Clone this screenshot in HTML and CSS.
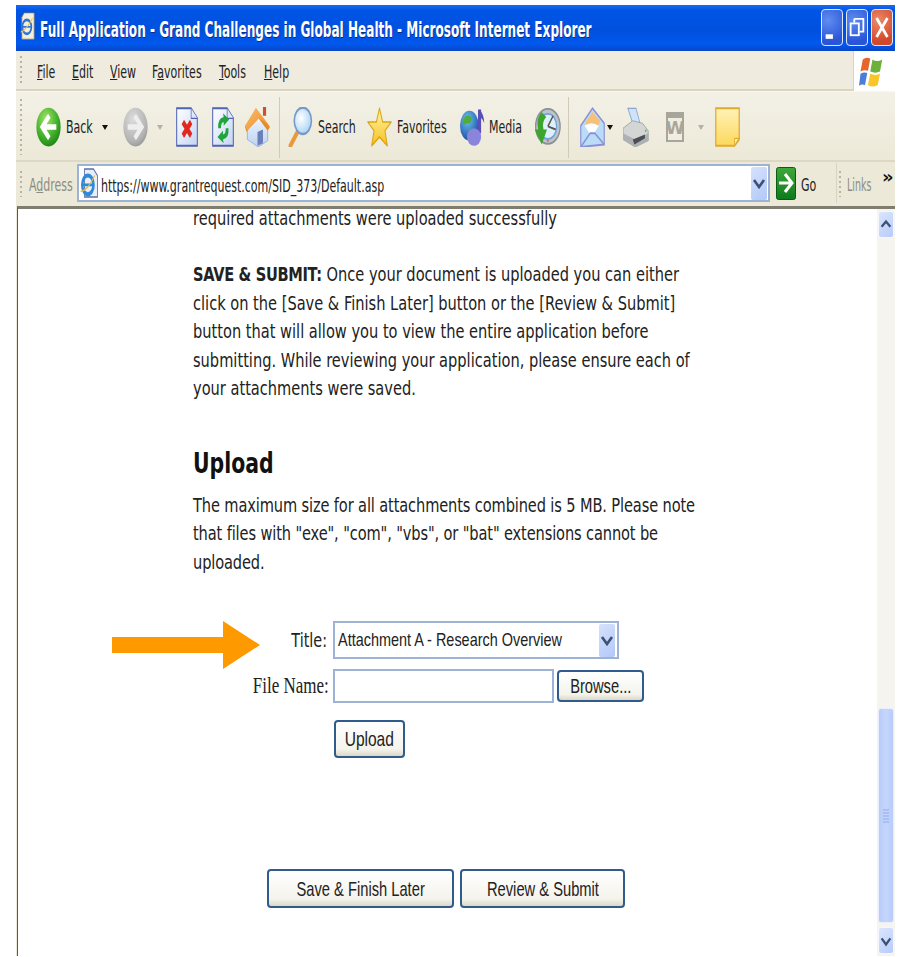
FILE: index.html
```html
<!DOCTYPE html>
<html lang="en">
<head>
<meta charset="utf-8">
<title>Full Application - Grand Challenges in Global Health</title>
<link rel="stylesheet" href="styles.css">
</head>
<body>
<svg class="defs" aria-hidden="true">
  <defs>
    <radialGradient id="gGreen" cx=".4" cy=".3" r=".8"><stop offset="0" stop-color="#a4e46a"/><stop offset=".6" stop-color="#3fae2a"/><stop offset="1" stop-color="#157a12"/></radialGradient>
    <radialGradient id="gGrey" cx=".4" cy=".3" r=".8"><stop offset="0" stop-color="#dcdcdc"/><stop offset=".7" stop-color="#b4b4b4"/><stop offset="1" stop-color="#8e8e8e"/></radialGradient>
    <linearGradient id="gPage" x1="0" y1="0" x2="1" y2="1"><stop offset="0" stop-color="#ffffff"/><stop offset="1" stop-color="#c4d4f4"/></linearGradient>
    <linearGradient id="gStar" x1="0" y1="0" x2="0" y2="1"><stop offset="0" stop-color="#fff6a8"/><stop offset="1" stop-color="#f8c020"/></linearGradient>
    <linearGradient id="gNote" x1="0" y1="0" x2="0" y2="1"><stop offset="0" stop-color="#fff2b8"/><stop offset="1" stop-color="#fdd85c"/></linearGradient>
    <linearGradient id="gRoof" x1="0" y1="0" x2="1" y2="1"><stop offset="0" stop-color="#fbbd6a"/><stop offset="1" stop-color="#e88a2a"/></linearGradient>
    <linearGradient id="gGo" x1="0" y1="0" x2="0" y2="1"><stop offset="0" stop-color="#3fa83a"/><stop offset="1" stop-color="#0d7a1c"/></linearGradient>
    <radialGradient id="gLens" cx=".4" cy=".4" r=".7"><stop offset="0" stop-color="#ffffff"/><stop offset="1" stop-color="#9fd0f5"/></radialGradient>
    <radialGradient id="gGlobe" cx=".4" cy=".3" r=".8"><stop offset="0" stop-color="#6cc4f0"/><stop offset="1" stop-color="#123f9e"/></radialGradient>
    <linearGradient id="gWall" x1="0" y1="0" x2="0" y2="1"><stop offset="0" stop-color="#f2f7fe"/><stop offset="1" stop-color="#bcd2f2"/></linearGradient>
  </defs>
</svg>

<div class="window">
  <header class="titlebar">
    <svg class="app-icon" viewBox="0 0 32 32" preserveAspectRatio="none">
      <path d="M9 1H27V31H5V6Z" fill="#f4efdc" stroke="#7d7a68"/>
      <circle cx="14" cy="17" r="8" fill="none" stroke="#2f73d8" stroke-width="3"/>
      <path d="M7 17H21" stroke="#2f73d8" stroke-width="2"/>
      <path d="M3 23Q14 20 24 7" fill="none" stroke="#f0c040" stroke-width="1.5"/>
    </svg>
    <div class="title-text"><span class="sq-title">Full Application - Grand Challenges in Global Health - Microsoft Internet Explorer</span></div>
    <div class="win-buttons">
      <div class="win-btn">
        <svg viewBox="0 0 22 37"><rect x="4" y="26" width="8" height="5" fill="#fff"/></svg>
      </div>
      <div class="win-btn">
        <svg viewBox="0 0 22 37"><path d="M8 9h10v14h-4M8 9v4" fill="none" stroke="#fff" stroke-width="2"/><rect x="4" y="14" width="9" height="13" fill="none" stroke="#fff" stroke-width="2"/></svg>
      </div>
      <div class="win-btn close">
        <svg viewBox="0 0 22 37"><path d="M5 8L17 29M17 8L5 29" stroke="#fff" stroke-width="3"/></svg>
      </div>
    </div>
  </header>

  <nav class="menubar">
    <i class="grip"></i>
    <div class="menus">
      <span class="menu m-file"><span class="sq-ui"><u>F</u>ile</span></span>
      <span class="menu m-edit"><span class="sq-ui"><u>E</u>dit</span></span>
      <span class="menu m-view"><span class="sq-ui"><u>V</u>iew</span></span>
      <span class="menu m-fav"><span class="sq-ui">F<u>a</u>vorites</span></span>
      <span class="menu m-tools"><span class="sq-ui"><u>T</u>ools</span></span>
      <span class="menu m-help"><span class="sq-ui"><u>H</u>elp</span></span>
    </div>
    <div class="flag-box">
      <svg class="flag" viewBox="0 0 32 44" preserveAspectRatio="none">
        <path d="M5 6Q10 2 15 5L12 21Q7 19 2 22Z" fill="#e8642c"/>
        <path d="M18 6Q24 10 31 6L28 22Q22 25 15 22Z" fill="#6cb23a"/>
        <path d="M2 25Q7 22 11 24L8 40Q4 38 0 41Z" fill="#4a7fd8"/>
        <path d="M15 25Q22 28 28 25L25 40Q18 44 12 40Z" fill="#f8c628"/>
      </svg>
    </div>
  </nav>

  <div class="toolbar">
    <i class="grip tall"></i>
    <svg class="ico i-back" viewBox="0 0 32 32" preserveAspectRatio="none">
      <circle cx="16" cy="16" r="15.5" fill="url(#gGreen)"/>
      <path d="M17 7L8 16L17 25M8 16H26" fill="none" stroke="#fff" stroke-width="4.5"/>
    </svg>
    <span class="lbl l-back"><span class="sq-ui">Back</span></span>
    <i class="drop d-back"></i>
    <svg class="ico i-fwd" viewBox="0 0 32 32" preserveAspectRatio="none">
      <circle cx="16" cy="16" r="15.5" fill="url(#gGrey)"/>
      <path d="M15 7L24 16L15 25M24 16H6" fill="none" stroke="#eee" stroke-width="4.5"/>
    </svg>
    <i class="drop off d-fwd"></i>
    <svg class="ico i-stop" viewBox="0 0 32 32" preserveAspectRatio="none">
      <path d="M1 1H22L31 9V31H1Z" fill="url(#gPage)" stroke="#4f63b4" stroke-width="1.5"/>
      <path d="M22 1V9H31" fill="#dfe7fa" stroke="#4f63b4"/>
      <path d="M10 12L22 23M22 12L10 23" stroke="#e0281c" stroke-width="5"/>
    </svg>
    <svg class="ico i-refresh" viewBox="0 0 32 32" preserveAspectRatio="none">
      <path d="M1 1H22L31 9V31H1Z" fill="url(#gPage)" stroke="#4f63b4" stroke-width="1.5"/>
      <path d="M22 1V9H31" fill="#dfe7fa" stroke="#4f63b4"/>
      <path d="M9 17Q8 9 17 8L16 5L25 10L17 15L17 12Q13 12 13 17Z" fill="#1fa53a"/>
      <path d="M24 17Q25 25 16 26L17 29L8 24L16 19L16 22Q20 22 20 17Z" fill="#1fa53a"/>
    </svg>
    <svg class="ico i-home" viewBox="0 0 32 32" preserveAspectRatio="none">
      <path d="M3 16V26L17 32L29 27V15L16 6Z" fill="url(#gWall)" stroke="#8fabdc" stroke-width=".8"/>
      <path d="M16 20L23 18V29L16 31Z" fill="#6a7fb8"/>
      <path d="M0 16L14 1L32 16L29 19L15 7L2 20Z" fill="#e88a2a"/>
      <path d="M0 15L14 1L31 15L18 9L3 19Z" fill="url(#gRoof)"/>
      <rect x="23" y="0" width="4" height="7" fill="#c8503a"/>
    </svg>
    <i class="tool-sep s1"></i>
    <svg class="ico i-search" viewBox="0 0 32 32" preserveAspectRatio="none">
      <path d="M13 19L3 31" stroke="#e69a3c" stroke-width="4.5" stroke-linecap="round"/>
      <ellipse cx="19" cy="11" rx="11" ry="10.5" fill="url(#gLens)" stroke="#7b98c8" stroke-width="2"/>
    </svg>
    <span class="lbl l-search"><span class="sq-ui">Search</span></span>
    <svg class="ico i-star" viewBox="0 0 32 32" preserveAspectRatio="none">
      <path d="M16 1L20 12L31 12L23 19L26 31L16 24L6 31L9 19L1 12L12 12Z" fill="url(#gStar)" stroke="#dca412" stroke-width="1.3" stroke-linejoin="round"/>
    </svg>
    <span class="lbl l-fav"><span class="sq-ui">Favorites</span></span>
    <svg class="ico i-media" viewBox="0 0 32 32" preserveAspectRatio="none">
      <circle cx="12" cy="15" r="12" fill="url(#gGlobe)"/>
      <path d="M6 8Q12 5 15 9Q14 14 9 13Q6 15 3 13ZM12 17L18 18L15 24L12 22Z" fill="#4fae3a"/>
      <path d="M25 2V21" stroke="#5a4fb8" stroke-width="4"/>
      <path d="M25 2Q31 6 31 13Q28 8 25 9Z" fill="#5a4fb8"/>
      <ellipse cx="18" cy="24" rx="9" ry="7" fill="#8a84dc"/>
    </svg>
    <span class="lbl l-media"><span class="sq-ui">Media</span></span>
    <svg class="ico i-history" viewBox="0 0 32 32" preserveAspectRatio="none">
      <circle cx="17" cy="15.5" r="14" fill="#bcc3cc" stroke="#8a8f96" stroke-width="1.5"/>
      <circle cx="17" cy="15.5" r="10" fill="#dff0fb" stroke="#6ca6dc" stroke-width="1.5"/>
      <path d="M17 15.5L23 7M17 15.5L26 18" stroke="#555" stroke-width="1.5"/>
      <path d="M10 4Q3 9 6 18L2 18L10 30L16 18L12 18Q10 12 15 8Z" fill="#3da52e"/>
      <circle cx="17" cy="27" r="1" fill="#e2643c"/>
    </svg>
    <i class="tool-sep s2"></i>
    <svg class="ico i-mail" viewBox="0 0 32 32" preserveAspectRatio="none">
      <path d="M1 15L16 1L31 13V30L1 32Z" fill="#b9dcf7" stroke="#8a90d8" stroke-width="1.5"/>
      <path d="M7 12L16 4L26 11L22 17Q15 12 9 18Z" fill="#f6c079"/>
      <path d="M6 15Q14 11 24 15L18 21L12 21Z" fill="#fff"/>
      <path d="M1 32L13 21H19L31 30" fill="none" stroke="#8a90d8" stroke-width="1.5"/>
    </svg>
    <i class="drop d-mail"></i>
    <svg class="ico i-print" viewBox="0 0 32 32" preserveAspectRatio="none">
      <path d="M6 1H16L21 13H12Z" fill="#cfe3f8" stroke="#88a4d0"/>
      <path d="M0 17L12 11L24 13L31 19V27L15 32L0 26Z" fill="#d4d6d6" stroke="#9a9d9f" stroke-width=".8"/>
      <path d="M0 21L15 26L31 21V27L15 32L0 26Z" fill="#aeb1b3"/>
      <path d="M12 26L27 22L27 25L14 30Z" fill="#4c4f52"/>
      <circle cx="28" cy="19" r="1" fill="#4fc04a"/>
    </svg>
    <div class="word">
      <svg class="ico-word" viewBox="0 0 18 30" preserveAspectRatio="none">
        <rect x="1" y="1" width="16" height="28" fill="#f0eee2" stroke="#a8a69a" stroke-width="2"/>
        <rect x="1" y="1" width="16" height="5" fill="#a8a69a"/>
        <text class="word-w" x="9" y="22" text-anchor="middle">W</text>
      </svg>
    </div>
    <i class="drop off d-word"></i>
    <svg class="ico i-note" viewBox="0 0 32 32" preserveAspectRatio="none">
      <path d="M1 1H31V26L25 31H1Z" fill="url(#gNote)" stroke="#e0aa2a" stroke-width="1.6"/>
      <path d="M25 31V25H31Z" fill="#fbe9a6" stroke="#e0aa2a"/>
    </svg>
  </div>

  <div class="addressbar">
    <i class="grip"></i>
    <span class="addr-label"><span class="sq-ui">A<u>d</u>dress</span></span>
    <div class="addr-box">
      <svg class="page-icon" viewBox="0 0 32 32" preserveAspectRatio="none">
        <path d="M8 1H24L31 8V31H8Z" fill="#e8edf8" stroke="#5a6ea8" stroke-width="1.5"/>
        <circle cx="14" cy="18" r="10" fill="none" stroke="#2f8ad8" stroke-width="4.5"/>
        <path d="M5 18H23" stroke="#2f8ad8" stroke-width="3"/>
        <path d="M1 25Q14 24 26 8" fill="none" stroke="#e8b840" stroke-width="1.5"/>
      </svg>
      <span class="url"><span class="sq-ui">https://www.grantrequest.com/SID_373/Default.asp</span></span>
      <div class="combo-btn addr-drop">
        <svg viewBox="0 0 16 33"><path d="M3 13L8 20L13 13" fill="none" stroke="#3d5176" stroke-width="2.6"/></svg>
      </div>
    </div>
    <svg class="go-icon" viewBox="0 0 20 33" preserveAspectRatio="none">
      <rect x=".5" y=".5" width="19" height="32" rx="2" fill="url(#gGo)" stroke="#0a5c14"/>
      <path d="M9 7L16 16L9 25M16 16H3" fill="none" stroke="#fff" stroke-width="3"/>
    </svg>
    <span class="go-label"><span class="sq-ui">Go</span></span>
    <i class="band-sep"></i>
    <i class="grip links-grip"></i>
    <span class="links"><span class="sq-links">Links</span></span>
    <span class="chevrons">»</span>
  </div>

  <main class="viewport">
    <div class="doc">
      <div class="copy">
        <p class="clipped">required attachments were uploaded successfully</p>
        <p class="para"><b>SAVE &amp; SUBMIT:</b> Once your document is uploaded you can either<br>click on the [Save &amp; Finish Later] button or the [Review &amp; Submit]<br>button that will allow you to view the entire application before<br>submitting. While reviewing your application, please ensure each of<br>your attachments were saved.</p>
        <h2 class="heading">Upload</h2>
        <p class="para tight">The maximum size for all attachments combined is 5 MB. Please note<br>that files with "exe", "com", "vbs", or "bat" extensions cannot be<br>uploaded.</p>
      </div>

      <form class="upload">
        <svg class="arrow" viewBox="0 0 148 48"><path d="M0 16H111V0L148 24L111 48V32H0Z" fill="#ff9900"/></svg>
        <label class="f-label title-label"><span class="sq-ui-r">Title:</span></label>
        <div class="select-box">
          <span class="select-text"><span class="sq-sel">Attachment A - Research Overview</span></span>
          <div class="combo-btn sel-drop">
            <svg viewBox="0 0 16 33"><path d="M3 13L8 20L13 13" fill="none" stroke="#3d5176" stroke-width="2.6"/></svg>
          </div>
        </div>
        <label class="f-label name-label"><span class="sq-serif">File Name:</span></label>
        <div class="file-row">
          <div class="file-input"></div>
          <div class="btn browse"><span class="sq-btn">Browse...</span></div>
        </div>
        <div></div>
        <div class="btn send"><span class="sq-send">Upload</span></div>
      </form>

      <div class="actions">
        <div class="btn save"><span class="sq-btn">Save &amp; Finish Later</span></div>
        <div class="btn review"><span class="sq-btn">Review &amp; Submit</span></div>
      </div>
    </div>

    <aside class="scrollbar">
      <div class="sb-btn sb-up">
        <svg viewBox="0 0 16 27"><path d="M3 16L8 10L13 16" fill="none" stroke="#3d5176" stroke-width="2.6"/></svg>
      </div>
      <div class="sb-track"></div>
      <div class="sb-thumb">
        <svg class="sb-grip" viewBox="0 0 8 14"><path d="M1 1H7M1 4H7M1 7H7M1 10H7M1 13H7" stroke="#8fa9ee" stroke-width="1"/></svg>
      </div>
      <div class="sb-btn sb-down">
        <svg viewBox="0 0 16 27"><path d="M3 11L8 18L13 11" fill="none" stroke="#3d5176" stroke-width="2.6"/></svg>
      </div>
    </aside>
  </main>
</div>
</body>
</html>
```

FILE: styles.css
```css
* { box-sizing: border-box; }

html, body { margin: 0; background: #fff; }

body {
  width: 899px;
  height: 957px;
  padding: 5px 4px 0 16px;
  overflow: hidden;
  font-family: "DejaVu Sans", sans-serif;
}

.defs { position: absolute; width: 0; height: 0; }

.window {
  display: flex;
  flex-direction: column;
  height: 951px;
  background: #ece9d8;
}

/* The capture is squeezed sideways, so runs of text are narrowed with a transform */
.sq-title, .sq-ui, .sq-links, .sq-ui-r, .sq-serif, .sq-sel, .sq-btn, .sq-send {
  display: inline-block;
  white-space: nowrap;
  transform-origin: left center;
}

/* Title bar */
.titlebar {
  display: flex;
  align-items: center;
  flex: 0 0 46px;
  padding: 0 2px 0 3px;
  background: linear-gradient(180deg, #1a6af0 0%, #0055e6 12%, #0050de 55%, #0058ee 85%, #0a46c4 100%);
}
.app-icon { width: 18px; height: 28px; margin-top: -4px; flex: none; }
.title-text { flex: 1; margin-left: 3px; height: 46px; padding-top: 2px; line-height: 46px; overflow: hidden; }
.sq-title {
  color: #fff;
  font-size: 21px;
  font-weight: bold;
  text-shadow: 1px 1px 0 #0a2a8c;
  transform: scaleX(.575);
}
.win-buttons { display: flex; gap: 3px; margin-top: -1px; }
.win-btn {
  width: 22px;
  height: 37px;
  border: 1px solid #dfe8fb;
  border-radius: 4px;
  background: radial-gradient(circle at 30% 30%, #5f8df0, #2a55d8 75%);
}
.win-btn svg { display: block; width: 100%; height: 100%; }
.win-btn.close { background: radial-gradient(circle at 30% 30%, #ec8a68, #d2482a 75%); }

/* Menu bar */
.menubar {
  display: flex;
  flex: 0 0 40px;
  align-items: center;
  padding-left: 4px;
  background: #efecdf;
  border-bottom: 2px solid #d8d4c0;
}
.grip {
  display: block;
  flex: none;
  width: 2px;
  height: 28px;
  background: repeating-linear-gradient(180deg, #b8b5a4 0 2px, transparent 2px 5px);
}
.grip.tall { height: 56px; }
.menus { display: flex; flex: 1; margin-left: 15px; padding-top: 3px; }
.menu { display: block; height: 22px; line-height: 22px; font-size: 17px; color: #222; }
.sq-ui { font-stretch: condensed; transform: scaleX(.72); }
.sq-links { font-stretch: condensed; transform: scaleX(.62); }
.m-file { width: 35px; }
.m-edit { width: 38px; }
.m-view { width: 42px; }
.m-fav { width: 67px; }
.m-tools { width: 45px; }
.m-help { width: 30px; }
.flag-box {
  display: flex;
  align-items: center;
  justify-content: center;
  align-self: stretch;
  width: 42px;
  margin-bottom: -2px;
  padding-right: 8px;
  background: #fff;
  border-left: 1px solid #d8d4c0;
}
.flag { width: 24px; height: 33px; }

/* Standard buttons */
.toolbar {
  display: flex;
  align-items: center;
  flex: 0 0 71px;
  padding: 2px 0 0 4px;
  background: linear-gradient(180deg, #f3f1e6, #ece9d8);
  border-top: 1px solid #f8f7f0;
  border-bottom: 2px solid #dcd8c4;
}
.ico { display: block; flex: none; width: 25px; height: 40px; }
.lbl { display: block; flex: none; font-size: 17px; height: 22px; line-height: 22px; color: #222; }
.drop {
  display: block;
  flex: none;
  width: 0;
  height: 0;
  border-left: 3px solid transparent;
  border-right: 3px solid transparent;
  border-top: 5px solid #111;
}
.drop.off { border-top-color: #b4b2a4; }
.tool-sep { display: block; flex: none; width: 1px; height: 61px; background: #cfcbb8; }

.i-back { margin-left: 14px; }
.l-back { width: 36px; margin-left: 5px; }
.d-back { margin-left: 0; }
.i-fwd { margin-left: 15px; }
.d-fwd { margin-left: 9px; }
.i-stop { width: 22px; margin-left: 13px; }
.i-refresh { width: 22px; margin-left: 14px; }
.i-home { margin-left: 11px; }
.s1 { margin-left: 9px; }
.i-search { margin-left: 8px; }
.l-search { width: 49px; margin-left: 5px; }
.i-star { margin-left: 0; }
.l-fav { width: 63px; margin-left: 5px; }
.i-media { margin-left: 0; }
.l-media { width: 44px; margin-left: 4px; }
.i-history { width: 28px; }
.s2 { margin-left: 7px; }
.i-mail { margin-left: 11px; }
.d-mail { margin-left: 2px; }
.i-print { width: 26px; margin-left: 10px; }
.word { flex: none; width: 18px; height: 30px; margin-left: 17px; }
.ico-word { display: block; width: 100%; height: 100%; }
.word-w { font: bold 17px "DejaVu Sans", sans-serif; fill: #a8a69a; }
.d-word { margin-left: 14px; }
.i-note { margin-left: 11px; }

/* Address bar */
.addressbar {
  display: flex;
  align-items: center;
  flex: 0 0 44px;
  padding-left: 4px;
  background: #ece9d8;
}
.addressbar > .grip { height: 26px; }
.addr-label { display: block; flex: none; width: 48px; margin-left: 7px; font-size: 17px; line-height: 22px; color: #8d8c80; margin-top: 2px; }
.addr-box {
  display: flex;
  align-items: center;
  flex: none;
  width: 693px;
  height: 38px;
  margin-top: -2px;
  background: #fff;
  border: 2px solid #9db3d6;
}
.page-icon { flex: none; width: 18px; height: 30px; margin-left: 1px; }
.url { flex: 1; margin: 5px 0 0 3px; font-size: 17px; line-height: 22px; color: #222; }
.combo-btn {
  flex: none;
  width: 16px;
  height: 33px;
  border-radius: 2px;
  background: linear-gradient(135deg, #d6e2fd, #b2c8f8);
}
.combo-btn svg { display: block; width: 100%; height: 100%; }
.addr-drop { margin-right: 1px; }
.go-icon { flex: none; width: 20px; height: 33px; margin: -2px 0 0 6px; }
.go-label { flex: none; width: 35px; margin-left: 5px; font-size: 17px; line-height: 22px; color: #222; margin-top: 2px; }
.band-sep { display: block; flex: none; width: 1px; height: 40px; margin-top: -3px; background: #d8d4c0; }
.links-grip { margin-left: 2px; height: 24px; }
.links { flex: none; width: 35px; margin-left: 6px; font-size: 17px; line-height: 22px; color: #8d8c80; margin-top: 2px; }
.chevrons { flex: none; font: bold 18px/18px "DejaVu Sans", sans-serif; color: #111; margin-top: -14px; }

/* Page area */
.viewport {
  display: flex;
  flex: 1;
  min-height: 0;
  margin-left: 1px;
  background: #fff;
  border-top: 3px solid #7f7d70;
  border-left: 1px solid #5a5950;
}
.doc { flex: 1; min-width: 0; overflow: hidden; background: #fff; }

.copy {
  width: 930px;
  margin: -5px 0 0 175px;
  font-size: 20px;
  line-height: 28.5px;
  color: #222;
  white-space: nowrap;
  transform: scaleX(.73);
  transform-origin: left top;
}
.copy b { letter-spacing: -.45px; }
.clipped, .para { margin: 0; }
.clipped { height: 28.5px; }
.para { margin-top: 27.5px; }
.heading {
  margin: 43px 0 0;
  font-size: 28px;
  line-height: 36px;
  font-weight: bold;
  color: #111;
}
.tight { margin-top: 9px; letter-spacing: -.17px; }

/* Upload form */
.upload {
  position: relative;
  display: grid;
  grid-template-columns: 315px 1fr;
  row-gap: 10px;
  margin-top: 45px;
}
.arrow { position: absolute; left: 94px; top: 0; width: 148px; height: 48px; }
.f-label { display: block; text-align: right; padding-right: 6px; white-space: nowrap; color: #222; }
.title-label { font-size: 19px; line-height: 38px; }
.sq-ui-r { transform: scaleX(.76); transform-origin: right center; }
.name-label { font: 23px/34px "Liberation Serif", serif; padding-right: 4px; }
.sq-serif { transform: scaleX(.74); transform-origin: right center; }
.select-box {
  display: flex;
  align-items: center;
  width: 286px;
  height: 38px;
  background: #fff;
  border: 2px solid #9db3d6;
}
.select-text { flex: 1 1 0; min-width: 0; padding-left: 3px; color: #222; font: 19px/22px "Liberation Sans", sans-serif; }
.sq-sel { transform: scaleX(.76); }
.sel-drop { width: 16px; height: 33px; margin-right: 2px; }
.file-row { display: flex; align-items: center; gap: 3px; }
.file-input { width: 221px; height: 34px; background: #fff; border: 2px solid #9db3d6; }
.btn {
  display: flex;
  align-items: center;
  justify-content: center;
  border: 2px solid #2f5c8c;
  border-radius: 4px;
  background: linear-gradient(180deg, #ffffff, #f4f3ec 80%, #dcd8c8);
  color: #222;
  font: 21px/24px "Liberation Sans", sans-serif;
  overflow: hidden;
}
.sq-btn { transform: scaleX(.7); transform-origin: center; }
.sq-send { transform: scaleX(.74); transform-origin: center; }
.browse { width: 87px; height: 32px; }
.send { width: 71px; height: 38px; margin: 7px 0 0 1px; }

.actions { display: flex; gap: 6px; margin: 111px 0 0 249px; }
.save { width: 187px; height: 39px; }
.review { width: 165px; height: 39px; }

/* Scroll bar */
.scrollbar {
  position: relative;
  display: flex;
  flex-direction: column;
  flex: none;
  width: 18px;
  padding: 2px 1px 2px;
  background: #f5f4ee;
}
.sb-btn {
  flex: none;
  height: 27px;
  border: 1px solid #f4f7fe;
  border-radius: 3px;
  background: linear-gradient(135deg, #dbe6fe, #b7ccfa);
}
.sb-btn svg { display: block; width: 100%; height: 100%; }
.sb-track { flex: 1; }
.sb-thumb {
  display: flex;
  align-items: center;
  justify-content: center;
  flex: none;
  height: 215px;
  margin-bottom: 4px;
  border: 1px solid #e8eefc;
  border-radius: 3px;
  background: linear-gradient(90deg, #b7ccfa, #c5d6fd 50%, #b7ccfa);
}
.sb-grip { width: 8px; height: 14px; }
```
